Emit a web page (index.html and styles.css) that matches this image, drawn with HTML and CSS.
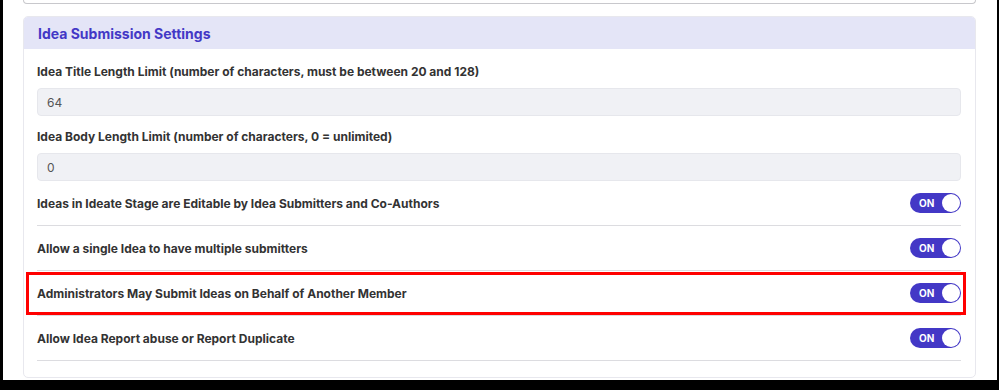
FILE: index.html
```html
<!DOCTYPE html>
<html lang="en">
<head>
    <meta charset="UTF-8">
    <meta name="viewport" content="width=device-width, initial-scale=1.0">
    <title>Idea Submission Settings</title>
    <link rel="stylesheet" href="styles.css">
</head>
<body>
    <div class="window">
        <div class="prev-card"></div>

        <section class="card">
            <div class="card-header">
                <h2>Idea Submission Settings</h2>
            </div>

            <div class="card-body">
                <div class="field">
                    <label for="titleLimit">Idea Title Length Limit (number of characters, must be between 20 and 128)</label>
                    <input id="titleLimit" type="text" value="64" readonly>
                </div>

                <div class="field field-last">
                    <label for="bodyLimit">Idea Body Length Limit (number of characters, 0 = unlimited)</label>
                    <input id="bodyLimit" type="text" value="0" readonly>
                </div>

                <div class="toggle-row">
                    <span class="toggle-label">Ideas in Ideate Stage are Editable by Idea Submitters and Co-Authors</span>
                    <span class="toggle"><span class="toggle-text">ON</span><span class="knob"></span></span>
                </div>

                <div class="toggle-row">
                    <span class="toggle-label">Allow a single Idea to have multiple submitters</span>
                    <span class="toggle"><span class="toggle-text">ON</span><span class="knob"></span></span>
                </div>

                <div class="toggle-row highlight">
                    <span class="toggle-label">Administrators May Submit Ideas on Behalf of Another Member</span>
                    <span class="toggle"><span class="toggle-text">ON</span><span class="knob"></span></span>
                </div>

                <div class="toggle-row">
                    <span class="toggle-label">Allow Idea Report abuse or Report Duplicate</span>
                    <span class="toggle"><span class="toggle-text">ON</span><span class="knob"></span></span>
                </div>
            </div>
        </section>
    </div>
</body>
</html>
```

FILE: styles.css
```css
html, body {
    margin: 0;
    padding: 0;
    height: 100%;
}
body {
    background-color: #000;
    font-family: Inter, "Noto Sans", Arial, sans-serif;
    color: #333;
    padding: 0 2px 10px 3px;
    box-sizing: border-box;
}
.window {
    background-color: #fff;
    height: 380px;
    padding: 0 21px 0 20px;
    overflow: hidden;
}
.prev-card {
    height: 3px;
    border: 1px solid #c8c8cc;
    border-top: none;
    border-radius: 0 0 4px 4px;
}
.card {
    margin-top: 12px;
    border: 1px solid #e8e8ee;
    border-radius: 5px;
    overflow: hidden;
}
.card-header {
    background-color: #e4e5f7;
    height: 32px;
    padding: 0 14px;
    display: flex;
    align-items: center;
}
.card-header h2 {
    margin: 0;
    font-size: 14px;
    font-weight: 700;
    color: #4338c6;
}
.card-body {
    padding: 15px 14px 16px 13px;
}
.field {
    margin-bottom: 13px;
}
.field-last {
    margin-bottom: 0;
}
.field label {
    display: block;
    font-size: 12px;
    font-weight: 700;
    line-height: 16px;
    margin-bottom: 8px;
    color: #333;
}
.field input {
    display: block;
    width: 100%;
    box-sizing: border-box;
    height: 28px;
    padding: 0 9px;
    font-family: inherit;
    font-size: 12px;
    color: #555;
    background-color: #f0f1f5;
    border: 1px solid #e6e7ec;
    border-radius: 4px;
    outline: none;
}
.toggle-row {
    position: relative;
    display: flex;
    align-items: center;
    justify-content: space-between;
    height: 44px;
    border-bottom: 1px solid #dcdce0;
}
.toggle-label {
    font-size: 12px;
    font-weight: 700;
    color: #333;
}
.toggle {
    display: flex;
    align-items: center;
    justify-content: space-between;
    width: 51px;
    height: 20px;
    box-sizing: border-box;
    padding: 0 1px 0 9px;
    background-color: #4338c6;
    border-radius: 10px;
}
.toggle-text {
    font-size: 10px;
    font-weight: 700;
    color: #fff;
}
.knob {
    width: 18px;
    height: 18px;
    background-color: #fff;
    border-radius: 50%;
}
.highlight::after {
    content: "";
    position: absolute;
    top: 1px;
    bottom: 0;
    left: -11px;
    right: -5px;
    border: 3px solid #f00;
    pointer-events: none;
}
```
